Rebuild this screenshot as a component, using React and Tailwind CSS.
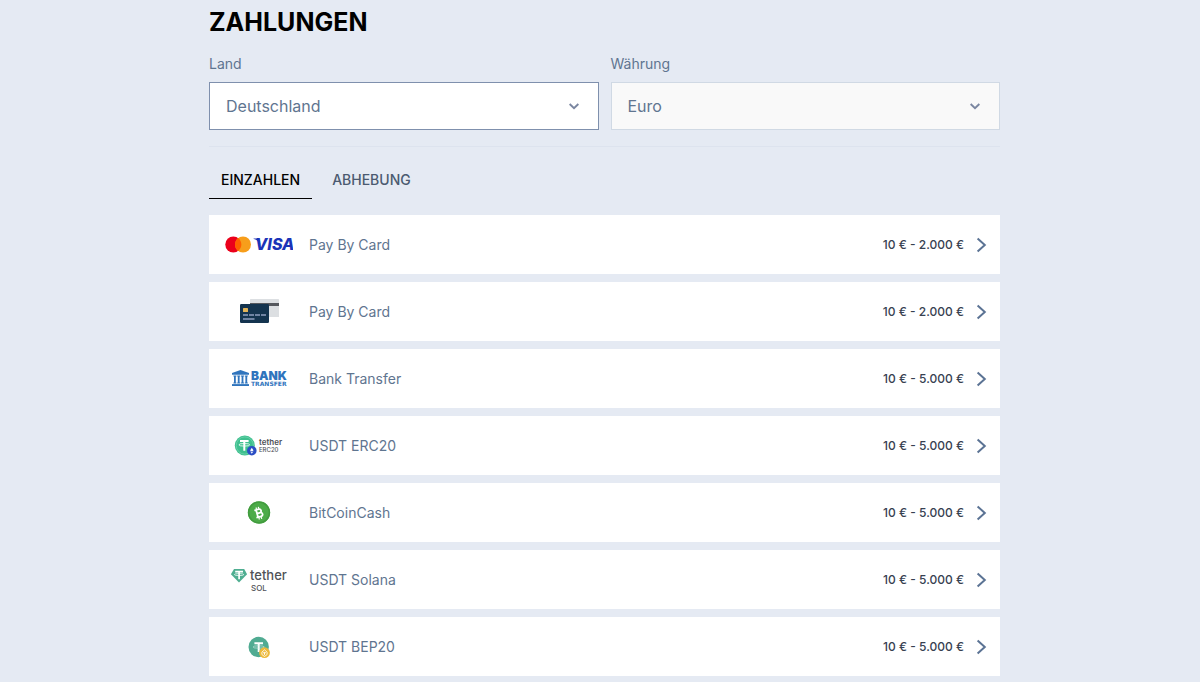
import React from "react";

function CardBrandsLogo() {
  return (
    <svg width="68" height="40" viewBox="0 0 68 40" aria-hidden="true">
      <circle cx="8.3" cy="19.5" r="8" fill="#eb001b" />
      <circle cx="18" cy="19.5" r="8" fill="#f79e1b" />
      <path d="M13.15 13.1a8 8 0 0 1 0 12.8a8 8 0 0 1 0-12.8z" fill="#ff5f00" />
      <path d="M28.6 13.6h5.2l1.6 5.6C34.2 16.6 31.6 14.6 28.6 14z" fill="#1a33b8" />
      <text
        x="30"
        y="25"
        fontSize="16"
        fontWeight="800"
        fontStyle="italic"
        fontFamily="Inter, sans-serif"
        fill="#1a33b8"
      >
        VISA
      </text>
    </svg>
  );
}

function CardsLogo() {
  return (
    <svg width="68" height="40" viewBox="0 0 68 40" aria-hidden="true">
      <rect x="25" y="7" width="29" height="18" rx="0.6" fill="#dcdfe2" />
      <rect x="25" y="11" width="29" height="3" fill="#55585e" />
      <rect x="15" y="12" width="29" height="19" rx="1.2" fill="#14344f" />
      <rect x="18" y="16" width="5" height="4" rx="0.6" fill="#e3b458" />
      <path
        d="M18 23h5M24 23h5M30 23h5M36 23h5M18 27h11.5"
        stroke="#8f9fc0"
        strokeWidth="1.7"
      />
    </svg>
  );
}

function BankLogo() {
  return (
    <svg width="68" height="40" viewBox="0 0 68 40" fill="#2f74bd" aria-hidden="true">
      <path d="M15.5 11L24 14.1v1.6H7v-1.6z" />
      <path d="M8.4 16.5h3v1h-.6v6h.6v1h-3v-1h.6v-6h-.6zM12.2 16.5h3v1h-.6v6h.6v1h-3v-1h.6v-6h-.6zM16 16.5h3v1h-.6v6h.6v1h-3v-1h.6v-6H16zM19.8 16.5h3v1h-.6v6h.6v1h-3v-1h.6v-6h-.6z" />
      <path d="M7 25.1h17V27H7z" />
      <text x="26" y="21" fontSize="12" fontWeight="900" fontFamily="Inter, sans-serif">
        BANK
      </text>
      <text x="26" y="27" fontSize="6" fontWeight="700" fontFamily="'DejaVu Sans', sans-serif">
        TRANSFER
      </text>
    </svg>
  );
}

function TetherErcLogo() {
  return (
    <svg width="68" height="40" viewBox="0 0 68 40" aria-hidden="true">
      <circle cx="19.8" cy="19.5" r="10" fill="#3fc08f" />
      <circle cx="19.8" cy="19.5" r="8.6" fill="none" stroke="#6fd3ad" strokeWidth="0.8" />
      <path d="M15 15.1h8.6M19.3 15.1v9.6" stroke="#fff" strokeWidth="2" />
      <ellipse cx="19.3" cy="18.8" rx="5.4" ry="1.3" fill="none" stroke="#fff" strokeWidth="0.8" />
      <circle cx="26.8" cy="24.7" r="4.8" fill="#2b4ec4" />
      <path d="M26.8 21.7l1.7 2.7-1.7 1-1.7-1zM25.1 25.2l1.7 1 1.7-1-1.7 2.6z" fill="#fff" />
      <text x="34" y="19" fontSize="8" fontWeight="600" fontFamily="Inter, sans-serif" fill="#505257">
        tether
      </text>
      <text x="34" y="26" fontSize="6" fontWeight="500" fontFamily="Inter, sans-serif" fill="#505257">
        ERC20
      </text>
    </svg>
  );
}

function BitcoinCashLogo() {
  return (
    <svg width="68" height="40" viewBox="0 0 68 40" aria-hidden="true">
      <circle cx="34" cy="19.5" r="11.2" fill="#4cab48" />
      <circle cx="34" cy="19.5" r="10.4" fill="none" stroke="#429b3f" strokeWidth="1.4" />
      <g transform="rotate(-16 34 20)" fill="none" stroke="#fff">
        <path
          d="M30.2 16.3h4.6a1.8 1.8 0 0 1 0 3.7h-2.6h3a1.9 1.9 0 0 1 0 3.8h-5M32 16.3v7.5"
          strokeWidth="1.8"
        />
        <path d="M32.6 13.9v2M35 13.9v2M32.6 24.4v2M35 24.4v2" strokeWidth="1.2" />
      </g>
    </svg>
  );
}

function TetherSolLogo() {
  return (
    <svg width="68" height="40" viewBox="0 0 68 40" aria-hidden="true">
      <path d="M9 9h10.2l2.9 5.2L14 22.6 5.9 14.2z" fill="#4fae91" />
      <path d="M10.2 11.6H18M14.1 11.6v7.6" stroke="#fff" strokeWidth="1.7" />
      <ellipse cx="14.1" cy="14.6" rx="4.7" ry="1" fill="none" stroke="#fff" strokeWidth="0.7" />
      <text x="25" y="20" fontSize="13" fontWeight="500" fontFamily="Inter, sans-serif" fill="#505257">
        tether
      </text>
      <text x="26" y="31" fontSize="8" fontWeight="500" fontFamily="Inter, sans-serif" fill="#505257">
        SOL
      </text>
    </svg>
  );
}

function TetherBepLogo() {
  return (
    <svg width="68" height="40" viewBox="0 0 68 40" aria-hidden="true">
      <circle cx="33.7" cy="20" r="10.2" fill="#50ab92" />
      <path d="M29.4 16.3h8.6M33.7 16.3v8.8" stroke="#fff" strokeWidth="2" />
      <ellipse cx="33.7" cy="20" rx="5.6" ry="1.2" fill="none" stroke="#d5ece5" strokeWidth="0.6" />
      <circle cx="39.5" cy="25.7" r="5.4" fill="#edb93a" />
      <path
        d="M36.9 25.1l2.6-2.3 2.6 2.3v2.4M36.9 25.1v2.4l2.6 2 2.6-2M39.5 24.9v3.2M38 25.3l1.5 1.2 1.5-1.2"
        fill="none"
        stroke="#fff"
        strokeWidth="0.8"
      />
    </svg>
  );
}

const methods = [
  { id: "card", name: "Pay By Card", range: "10 € - 2.000 €", Logo: CardBrandsLogo },
  { id: "card-2", name: "Pay By Card", range: "10 € - 2.000 €", Logo: CardsLogo },
  { id: "bank", name: "Bank Transfer", range: "10 € - 5.000 €", Logo: BankLogo },
  { id: "usdt-erc20", name: "USDT ERC20", range: "10 € - 5.000 €", Logo: TetherErcLogo },
  { id: "bch", name: "BitCoinCash", range: "10 € - 5.000 €", Logo: BitcoinCashLogo },
  { id: "usdt-sol", name: "USDT Solana", range: "10 € - 5.000 €", Logo: TetherSolLogo },
  { id: "usdt-bep20", name: "USDT BEP20", range: "10 € - 5.000 €", Logo: TetherBepLogo },
];

function SelectField({ id, label, value, disabled }) {
  return (
    <div className="flex-1 min-w-0">
      <label htmlFor={id} className="block mb-2 text-sm leading-5 text-[#5f7590]">
        {label}
      </label>
      <div className="relative">
        <select
          id={id}
          disabled={disabled}
          className="block w-full h-12 pl-4 pr-10 appearance-none border border-[#7f90ad] bg-white text-base text-[#5f7590] opacity-100 disabled:border-[#d0d9e4] disabled:bg-[#f9f9f9]"
        >
          <option>{value}</option>
        </select>
        <svg
          className="absolute right-5 top-1/2 -translate-y-1/2 pointer-events-none"
          width="10"
          height="8"
          viewBox="0 0 10 8"
          fill="none"
          stroke="#7a86a0"
          strokeWidth="2"
          aria-hidden="true"
        >
          <path d="M0.6 2l4.4 4.2L9.4 2" />
        </svg>
      </div>
    </div>
  );
}

function MethodRow({ name, range, Logo }) {
  return (
    <li>
      <button className="flex w-full h-[59px] items-center bg-white pl-4 pr-[13px] text-left cursor-pointer">
        <Logo />
        <span className="flex-1 pl-4 text-sm text-[#5f7590]">{name}</span>
        <span className="text-xs font-medium text-[#374151]">{range}</span>
        <svg
          className="ml-3"
          width="11"
          height="16"
          viewBox="0 0 11 16"
          fill="none"
          stroke="#5b7394"
          strokeWidth="2"
          aria-hidden="true"
        >
          <path d="M1.6 1.4L8.8 8l-7.2 6.6" />
        </svg>
      </button>
    </li>
  );
}

export default function App() {
  return (
    <div className="min-h-screen bg-[#e5eaf3] pl-[9px] font-['Inter',sans-serif]">
      <div className="mx-auto max-w-[791px] pt-1.5">
        {/* Title */}
        <h1 className="text-[25px] leading-8 font-bold text-black">ZAHLUNGEN</h1>

        {/* Country and currency */}
        <div className="mt-4 flex gap-3">
          <SelectField id="country" label="Land" value="Deutschland" />
          <SelectField id="currency" label="Währung" value="Euro" disabled />
        </div>

        <hr className="mt-4 border-[#dde3ee]" />

        {/* Tabs */}
        <div className="mt-4 flex gap-2 text-sm" role="tablist">
          <button
            role="tab"
            aria-selected="true"
            className="border-b border-black px-3 pt-[7px] pb-2 font-medium text-black"
          >
            EINZAHLEN
          </button>
          <button
            role="tab"
            aria-selected="false"
            className="border-b border-transparent px-3 pt-[7px] pb-2 font-medium text-[#4b5a70]"
          >
            ABHEBUNG
          </button>
        </div>

        {/* Payment methods */}
        <ul className="mt-4 flex flex-col gap-2">
          {methods.map((method) => (
            <MethodRow key={method.id} {...method} />
          ))}
        </ul>
      </div>
    </div>
  );
}
